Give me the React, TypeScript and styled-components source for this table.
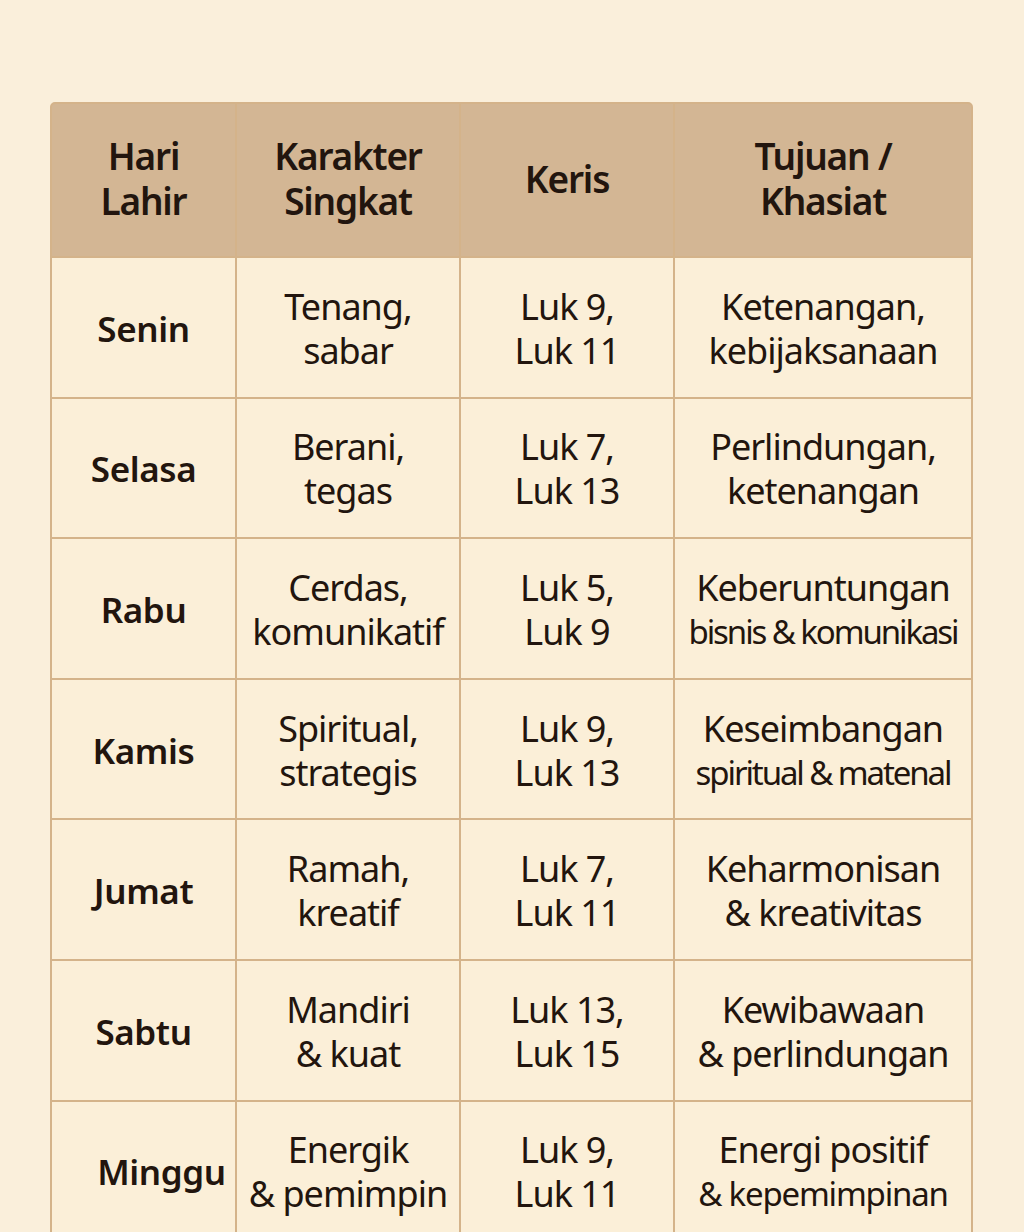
import React from "react";
import styled, { createGlobalStyle } from "styled-components";

const Global = createGlobalStyle`
  html, body {
    margin: 0;
    padding: 0;
    background: #faefdb;
  }
  body {
    font-family: "Noto Sans", "DejaVu Sans", sans-serif;
    color: #241710;
  }
`;

const Page = styled.div`
  padding: 102px 0 0 50px;
  height: 1232px;
  box-sizing: border-box;
  overflow: hidden;
`;

const Table = styled.div`
  width: 923px;
  box-sizing: border-box;
  display: grid;
  grid-template-columns: 183px 222px 212px 296px;
  grid-template-rows: 152px repeat(7, 138.6px);
  gap: 2px;
  background: #d4b38a;
  border: 2px solid #d4b38a;
  border-radius: 5px 5px 0 0;
  overflow: hidden;
`;

const HeadCell = styled.div`
  background: #d3b694;
  display: flex;
  flex-direction: column;
  align-items: center;
  justify-content: center;
  text-align: center;
  font-size: 37px;
  font-weight: 600;
  letter-spacing: -1.2px;
  line-height: 45px;
  color: #22150e;
  padding-bottom: 4px;
`;

const Cell = styled.div<{ $bold?: boolean; $shift?: boolean }>`
  background: #fbefd8;
  display: flex;
  flex-direction: column;
  align-items: center;
  justify-content: center;
  text-align: center;
  font-size: ${(p) => (p.$bold ? "35px" : "36px")};
  font-weight: ${(p) => (p.$bold ? 600 : 400)};
  letter-spacing: ${(p) => (p.$bold ? "-0.4px" : "-1px")};
  line-height: 44px;
  color: #22150e;
  padding-top: 3px;
  padding-left: ${(p) => (p.$shift ? "36px" : "0")};
`;

const Line = styled.span<{ $squeeze?: string }>`
  display: block;
  white-space: nowrap;
  letter-spacing: ${(p) => p.$squeeze ?? "inherit"};
  font-size: ${(p) => (p.$squeeze ? "33px" : "inherit")};
`;

type Row = {
  day: string;
  shift?: boolean;
  karakter: string[];
  keris: string[];
  tujuan: { text: string; squeeze?: string }[];
};

const rows: Row[] = [
  { day: "Senin", karakter: ["Tenang,", "sabar"], keris: ["Luk 9,", "Luk 11"], tujuan: [{ text: "Ketenangan," }, { text: "kebijaksanaan" }] },
  { day: "Selasa", karakter: ["Berani,", "tegas"], keris: ["Luk 7,", "Luk 13"], tujuan: [{ text: "Perlindungan," }, { text: "ketenangan" }] },
  { day: "Rabu", karakter: ["Cerdas,", "komunikatif"], keris: ["Luk 5,", "Luk 9"], tujuan: [{ text: "Keberuntungan" }, { text: "bisnis & komunikasi", squeeze: "-2.1px" }] },
  { day: "Kamis", karakter: ["Spiritual,", "strategis"], keris: ["Luk 9,", "Luk 13"], tujuan: [{ text: "Keseimbangan" }, { text: "spiritual & matenal", squeeze: "-2.1px" }] },
  { day: "Jumat", karakter: ["Ramah,", "kreatif"], keris: ["Luk 7,", "Luk 11"], tujuan: [{ text: "Keharmonisan" }, { text: "& kreativitas" }] },
  { day: "Sabtu", karakter: ["Mandiri", "& kuat"], keris: ["Luk 13,", "Luk 15"], tujuan: [{ text: "Kewibawaan" }, { text: "& perlindungan" }] },
  { day: "Minggu", shift: true, karakter: ["Energik", "& pemimpin"], keris: ["Luk 9,", "Luk 11"], tujuan: [{ text: "Energi positif" }, { text: "& kepemimpinan", squeeze: "-1.2px" }] },
];

export default function App() {
  return (
    <>
      <Global />
      <Page>
        <Table>
          <HeadCell>
            <Line>Hari</Line>
            <Line>Lahir</Line>
          </HeadCell>
          <HeadCell>
            <Line>Karakter</Line>
            <Line>Singkat</Line>
          </HeadCell>
          <HeadCell>
            <Line>Keris</Line>
          </HeadCell>
          <HeadCell>
            <Line>Tujuan /</Line>
            <Line>Khasiat</Line>
          </HeadCell>
          {rows.map((r) => (
            <React.Fragment key={r.day}>
              <Cell $bold $shift={r.shift}>
                <Line>{r.day}</Line>
              </Cell>
              <Cell>
                {r.karakter.map((t) => (
                  <Line key={t}>{t}</Line>
                ))}
              </Cell>
              <Cell>
                {r.keris.map((t) => (
                  <Line key={t}>{t}</Line>
                ))}
              </Cell>
              <Cell>
                {r.tujuan.map((t) => (
                  <Line key={t.text} $squeeze={t.squeeze}>
                    {t.text}
                  </Line>
                ))}
              </Cell>
            </React.Fragment>
          ))}
        </Table>
      </Page>
    </>
  );
}
